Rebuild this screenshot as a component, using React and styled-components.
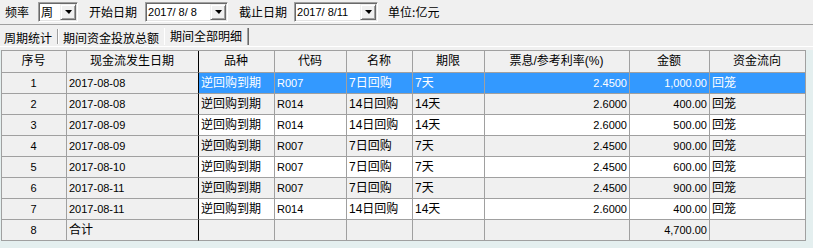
import React from "react";
import styled, { createGlobalStyle } from "styled-components";

const Global = createGlobalStyle`
  html, body { margin: 0; padding: 0; background: #f0f0f0; }
  body { font-family: "Liberation Sans", "Noto Sans CJK SC", sans-serif; font-size: 12px; color: #000; }
  * { box-sizing: border-box; }
`;

const Page = styled.div`
  width: 813px;
  height: 248px;
  display: flex;
  flex-direction: column;
  overflow: hidden;
  background: #f0f0f0;
`;

const Toolbar = styled.div`
  height: 25px;
  display: flex;
  align-items: center;
  border-bottom: 1px solid #a0a0a0;
  padding-left: 5px;
  padding-bottom: 1px;
`;

const Label = styled.span`
  font-family: "Noto Sans CJK SC", sans-serif;
  font-size: 12px;
  line-height: 14px;
  margin-left: ${(p) => p.$ml || 0}px;
  white-space: nowrap;
`;

const Combo = styled.div`
  width: ${(p) => p.$w}px;
  height: 20px;
  margin-left: ${(p) => p.$ml || 0}px;
  display: flex;
  align-items: center;
  background: #fff;
  border: 1px solid;
  border-color: #a0a0a0 #ffffff #ffffff #a0a0a0;
  box-shadow: inset 1px 1px 0 #696969, inset -1px -1px 0 #e3e3e3;
  padding: 1px 1px 1px 2px;
`;

const ComboText = styled.span`
  flex: 1;
  white-space: pre;
  font-family: ${(p) => (p.$cjk ? '"Noto Sans CJK SC", sans-serif' : '"Liberation Sans", sans-serif')};
  font-size: ${(p) => (p.$cjk ? 12 : 11)}px;
  line-height: 16px;
  color: #000;
`;

const DropBtn = styled.div`
  width: 16px;
  height: 16px;
  background: #f0f0f0;
  border-top: 1px solid #f0f0f0;
  border-left: 1px solid #f0f0f0;
  border-right: 1px solid #696969;
  border-bottom: 1px solid #696969;
  box-shadow: inset 1px 1px 0 #ffffff, inset -1px -1px 0 #a0a0a0;
  display: flex;
  align-items: center;
  justify-content: center;
`;

const Arrow = styled.div`
  width: 0;
  height: 0;
  border-left: 4px solid transparent;
  border-right: 3px solid transparent;
  border-top: 4px solid #000;
  margin-top: 1px;
`;

const TabStrip = styled.div`
  height: 22px;
  display: flex;
  align-items: stretch;
  border-top: 0;
  border-bottom: 1px solid #ffffff;
`;

const Tab = styled.div`
  display: flex;
  align-items: center;
  font-family: "Noto Sans CJK SC", sans-serif;
  font-size: 12px;
  padding: ${(p) => (p.$active ? "0 5px 3px 5px" : "2px 5px 0 4px")};
  margin-top: 3px;
  margin-bottom: 1px;
  border-left: ${(p) => (p.$active ? "1px solid #ffffff" : "0")};
  border-right: ${(p) => (p.$active ? "1px solid #a0a0a0" : "0")};
  box-shadow: ${(p) => (p.$active ? "1px 0 0 #696969" : "none")};
  white-space: nowrap;
`;

const TabSep = styled.div`
  width: 2px;
  margin: 4px 0 2px;
  border-left: 1px solid #a0a0a0;
  border-right: 1px solid #ffffff;
`;

const Spacer = styled.div`
  height: 3px;
`;

const GridArea = styled.div`
  flex: 1;
  background: #e4efef;
  padding-left: 1px;
`;

const Grid = styled.div`
  display: grid;
  grid-template-columns: 65px 132px 76px 72px 66px 72px 145px 80px 96px;
  width: fit-content;
  border-left: 1px solid #a0a0a0;
  border-top: 1px solid #a0a0a0;
`;

const Cell = styled.div`
  height: ${(p) => (p.$head ? 22 : 21)}px;
  line-height: ${(p) => (p.$head ? 21 : 20)}px;
  border-right: 1px solid ${(p) => (p.$dark ? "#000000" : "#a0a0a0")};
  border-bottom: 1px solid #a0a0a0;
  background: ${(p) => p.$bg};
  color: ${(p) => (p.$sel ? "#ffffff" : "#000000")};
  text-align: ${(p) => p.$align || "left"};
  padding: 0 2px 0 ${(p) => (p.$align === "left" ? 2 : 1)}px;
  font-family: ${(p) => (p.$num ? '"Liberation Sans", sans-serif' : '"Liberation Sans", "Noto Sans CJK SC", sans-serif')};
  font-size: ${(p) => (p.$num ? 11 : 12)}px;
  white-space: nowrap;
  overflow: hidden;
`;

const cols = [
  { key: "no", title: "序号", align: "center", fixed: true, num: true },
  { key: "date", title: "现金流发生日期", align: "left", fixed: true, dark: true, num: true },
  { key: "type", title: "品种", align: "left" },
  { key: "code", title: "代码", align: "left", num: true },
  { key: "name", title: "名称", align: "left" },
  { key: "term", title: "期限", align: "left" },
  { key: "rate", title: "票息/参考利率(%)", align: "right", num: true },
  { key: "amt", title: "金额", align: "right", num: true },
  { key: "dir", title: "资金流向", align: "left" },
];

const rows = [
  ["1", "2017-08-08", "逆回购到期", "R007", "7日回购", "7天", "2.4500", "1,000.00", "回笼"],
  ["2", "2017-08-08", "逆回购到期", "R014", "14日回购", "14天", "2.6000", "400.00", "回笼"],
  ["3", "2017-08-09", "逆回购到期", "R014", "14日回购", "14天", "2.6000", "500.00", "回笼"],
  ["4", "2017-08-09", "逆回购到期", "R007", "7日回购", "7天", "2.4500", "900.00", "回笼"],
  ["5", "2017-08-10", "逆回购到期", "R007", "7日回购", "7天", "2.4500", "600.00", "回笼"],
  ["6", "2017-08-11", "逆回购到期", "R007", "7日回购", "7天", "2.4500", "900.00", "回笼"],
  ["7", "2017-08-11", "逆回购到期", "R014", "14日回购", "14天", "2.6000", "400.00", "回笼"],
  ["8", "合计", "", "", "", "", "", "4,700.00", ""],
];

function DateCombo({ value, w, ml }) {
  return (
    <Combo $w={w} $ml={ml}>
      <ComboText>{value}</ComboText>
      <DropBtn>
        <Arrow />
      </DropBtn>
    </Combo>
  );
}

export default function App() {
  return (
    <>
      <Global />
      <Page>
        <Toolbar>
          <Label>频率</Label>
          <Combo $w={40} $ml={9}>
            <ComboText $cjk>周</ComboText>
            <DropBtn>
              <Arrow />
            </DropBtn>
          </Combo>
          <Label $ml={11}>开始日期</Label>
          <DateCombo value="2017/ 8/ 8" w={83} ml={8} />
          <Label $ml={11}>截止日期</Label>
          <DateCombo value="2017/ 8/11" w={84} ml={7} />
          <Label $ml={10}>单位:亿元</Label>
        </Toolbar>
        <TabStrip>
          <Tab>周期统计</Tab>
          <TabSep />
          <Tab>期间资金投放总额</Tab>
          <Tab $active>期间全部明细</Tab>
        </TabStrip>
        <Spacer />
        <GridArea>
          <Grid>
            {cols.map((c) => (
              <Cell key={c.key} $head $align="center" $bg="#f0f0f0" $dark={c.dark}>
                {c.title}
              </Cell>
            ))}
            {rows.map((r, ri) =>
              r.map((v, ci) => {
                const c = cols[ci];
                const selected = ri === 0 && !c.fixed;
                const last = ri === rows.length - 1;
                let bg = "#ffffff";
                if (c.fixed || last || ri % 2 === 1) bg = "#f0f0f0";
                if (selected) bg = "#3399ff";
                const isNum = c.num && !(last && ci === 1);
                return (
                  <Cell
                    key={ri + "-" + ci}
                    $align={c.align}
                    $bg={bg}
                    $sel={selected}
                    $dark={c.dark}
                    $num={isNum}
                  >
                    {v}
                  </Cell>
                );
              })
            )}
          </Grid>
        </GridArea>
      </Page>
    </>
  );
}
